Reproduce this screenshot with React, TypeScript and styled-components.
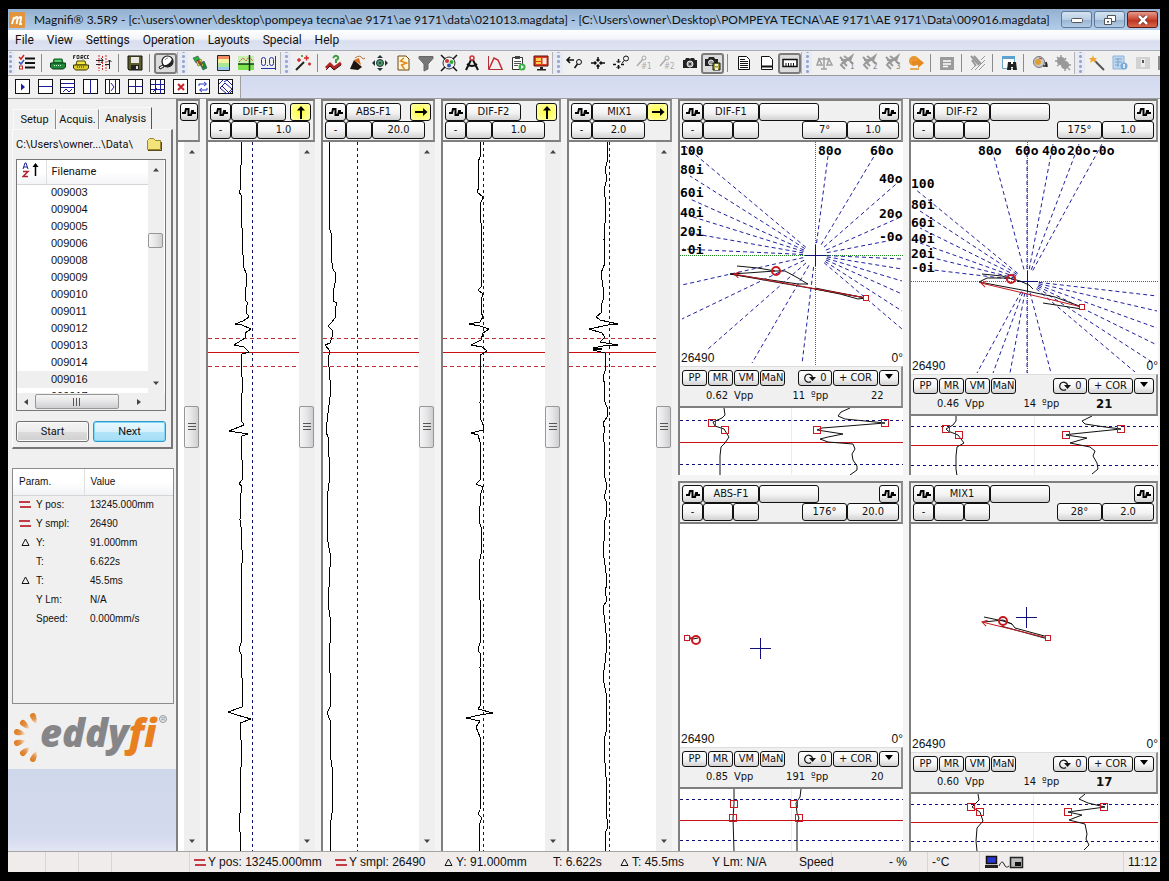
import React from "react";
import styled, { createGlobalStyle, css } from "styled-components";

const UI = `Roboto, "Open Sans", sans-serif`;
const TAHOMA = `"DejaVu Sans Condensed", "DejaVu Sans", sans-serif`;
const ARIAL = `"Liberation Sans", sans-serif`;

const GlobalStyle = createGlobalStyle`
  * { box-sizing: border-box; }
  body { margin: 0; background: #000; font-family: ${UI}; font-size: 12px; color: #111; }
  button { margin: 0; padding: 0; font: inherit; color: inherit; }
`;

/* ---------- window frame ---------- */

const Frame = styled.div`
  min-height: 100vh;
  padding: 9px 9px 9px 8px;
  background: #000;
  display: flex;
  flex-direction: column;
`;

const TitleBar = styled.header`
  height: 21px;
  display: flex;
  align-items: center;
  padding: 0 2px 0 1px;
  background: linear-gradient(#93b0d0, #b3cdea);
`;

const Title = styled.h1`
  margin: 0 0 0 9px;
  flex: 1;
  font-family: Lato, ${UI};
  font-size: 12px;
  font-weight: 400;
  line-height: 18px;
  white-space: nowrap;
  overflow: hidden;
`;

const WindowButtons = styled.div`
  display: flex;
  gap: 2px;
`;

const WindowButton = styled.button<{ $close?: boolean }>`
  width: 31px;
  height: 17px;
  display: grid;
  place-items: center;
  border: 1px solid ${(p) => (p.$close ? "#5c1a16" : "#5f7a99")};
  border-radius: 3px;
  background: ${(p) =>
    p.$close
      ? "linear-gradient(#e59a8c, #c9452f 50%, #b8301c 51%, #d9674a)"
      : "linear-gradient(#d5e3f2, #b9cee4 50%, #98b4d2 51%, #b4cce6)"};
`;

const MenuBar = styled.nav`
  height: 20px;
  display: flex;
  align-items: center;
  gap: 13px;
  padding-left: 7px;
  background: linear-gradient(#ffffff, #f2f4fa 45%, #d9deef 55%, #dfe4f3);
`;

const MenuItem = styled.button`
  border: 0;
  background: none;
  font-size: 12px;
  line-height: 18px;
`;

/* ---------- tool bars ---------- */

const ToolBar = styled.div`
  height: 26px;
  display: flex;
  align-items: center;
  overflow: hidden;
  background: #f0f0f0;
  border-top: 1px solid #a8abb5;
  border-bottom: 1px solid #9a9a9a;
`;

const ToolButton = styled.button<{ $pressed?: boolean }>`
  flex: none;
  width: 23px;
  height: 21px;
  display: grid;
  place-items: center;
  border: 1px solid transparent;
  border-radius: 3px;
  background: none;
  ${(p) =>
    p.$pressed &&
    css`
      border: 2px solid #7c7c7c;
      background: #dcdcdc;
    `}
`;

const Separator = styled.i`
  flex: none;
  width: 1px;
  height: 18px;
  margin: 0 4px 0 3px;
  background: #8c8c8c;
`;

const Grip = styled.i<{ $first?: boolean }>`
  flex: none;
  width: ${(p) => (p.$first ? 7 : 11)}px;
  height: 22px;
  border-left: ${(p) => (p.$first ? "0" : "1px solid #b4b4b4")};
  background: radial-gradient(circle, #97a4cc 1px, transparent 2px) right 2px top 2px / 5px 5px repeat-y, #e9ebf4;
`;

const LayoutBar = styled.div`
  height: 22px;
  display: flex;
  align-items: center;
  background: linear-gradient(#d3daf0, #dbe0f2);
`;

const LayoutButtons = styled.div`
  width: 233px;
  height: 22px;
  padding: 0 6px 0 7px;
  display: flex;
  align-items: center;
  justify-content: space-between;
  background: #f0f0f0;
  border-right: 1px solid #a0a0a0;
`;

const LayoutButton = styled.button`
  width: 16px;
  height: 16px;
  display: grid;
  border: 0;
  background: none;
`;

/* ---------- workspace ---------- */

const Workspace = styled.main`
  flex: 1;
  display: grid;
  grid-template-columns:
    162px 24px minmax(0, 109fr) minmax(0, 114fr) minmax(0, 120fr) minmax(0, 105fr)
    minmax(0, 225fr) minmax(0, 249fr);
  column-gap: 6px;
  padding-right: 2px;
  background: #f4f4f4;
  border-top: 1px solid #9c9c9c;
`;

const Sidebar = styled.aside`
  margin-right: -6px;
  padding: 0 2px 0 4px;
  display: flex;
  flex-direction: column;
  background: #f0f0f0;
`;

const SidebarSlot = styled.div`
  display: flex;
  flex-direction: column;
`;

const Tabs = styled.div`
  display: flex;
  align-items: flex-end;
  height: 30px;
  padding-left: 1px;
`;

const Tab = styled.button<{ $active?: boolean }>`
  height: ${(p) => (p.$active ? 22 : 20)}px;
  width: ${(p) => (p.$active ? 53 : 43)}px;
  border: 1px solid #fafafa;
  border-right: 1px solid ${(p) => (p.$active ? "#555" : "#8a8a8a")};
  border-bottom: 0;
  background: #f0f0f0;
  font-size: 11px;
  line-height: 16px;
`;

const TabPage = styled.section`
  height: 320px;
  margin-right: 1px;
  padding: 2px 5px 5px 3px;
  display: flex;
  flex-direction: column;
  border: 1px solid #fafafa;
  border-right: 2px solid #777;
  border-bottom: 2px solid #777;
`;

const PathRow = styled.div`
  height: 24px;
  margin-bottom: 3px;
  display: flex;
  align-items: center;
  justify-content: space-between;
  padding-right: 3px;
  font-size: 11px;
`;

const ListBox = styled.div`
  height: 252px;
  display: grid;
  grid-template: minmax(0, 1fr) 17px / minmax(0, 1fr) 17px;
  border: 1px solid #777;
  background: #fff;
`;

const ListView = styled.div`
  overflow: hidden;
`;

const FileTable = styled.table`
  width: 100%;
  border-collapse: collapse;
  table-layout: fixed;
  font-family: ${ARIAL};
  font-size: 11px;
  th {
    height: 24px;
    padding: 0 0 0 5px;
    text-align: left;
    font-family: ${UI};
    font-weight: 400;
    background: linear-gradient(#fff 50%, #f3f4f6);
    border-bottom: 1px solid #d5d5d5;
  }
  th:first-child {
    width: 29px;
    border-right: 1px solid #dedfe1;
  }
  td {
    height: 17px;
    padding: 0 0 0 5px;
    line-height: 15px;
  }
`;

const FileRow = styled.tr<{ $selected?: boolean }>`
  background: ${(p) => (p.$selected ? "#efefef" : "transparent")};
`;

const ActionRow = styled.div`
  display: flex;
  gap: 4px;
  margin-top: 10px;
`;

const ActionButton = styled.button<{ $primary?: boolean }>`
  flex: 1;
  height: 21px;
  border: 1px solid ${(p) => (p.$primary ? "#2c9ac9" : "#707070")};
  border-radius: 3px;
  font-size: 11px;
  background: ${(p) =>
    p.$primary
      ? "linear-gradient(#eaf8fe, #d6f0fc 50%, #b4e4f9 51%, #a5def5)"
      : "linear-gradient(#f4f4f4, #ebebeb 50%, #dcdcdc 51%, #d0d0d0)"};
  box-shadow: inset 0 0 0 1px ${(p) => (p.$primary ? "#7fd8f5" : "#fbfbfb")};
`;

const ParamBox = styled.div`
  height: 236px;
  margin-top: 19px;
  border: 1px solid #8c8c8c;
`;

const ParamTable = styled.table`
  width: 100%;
  border-collapse: collapse;
  table-layout: fixed;
  font-family: ${ARIAL};
  font-size: 10px;
  th,
  td {
    padding: 0 0 0 6px;
    height: 19px;
    text-align: left;
    font-weight: 400;
    white-space: nowrap;
  }
  thead th {
    height: 26px;
    background: linear-gradient(#fff 50%, #f1f3f5);
    border-bottom: 1px solid #d5d5d5;
  }
  thead th:first-child {
    width: 71px;
    border-right: 1px solid #e0e0e0;
  }
`;

const ParamName = styled.span`
  display: grid;
  grid-template-columns: 12px auto;
  align-items: center;
  gap: 5px;
`;

const LogoBox = styled.div`
  height: 65px;
  padding: 7px 0 0 1px;
`;

const SidebarFill = styled.div`
  flex: 1;
  margin: 0 -2px 0 -4px;
  background: linear-gradient(#cfd7eb, #d3daee 80%, #e2e6f4);
`;

/* ---------- strip charts ---------- */

const Panel = styled.section`
  min-width: 0;
  display: flex;
  flex-direction: column;
  border-left: 2px solid #7f7f7f;
  background: #fff;
`;

const PanelHeader = styled.div`
  height: 43px;
  flex: none;
  padding: 2px 2px 0;
  display: flex;
  flex-direction: column;
  border-top: 2px solid #7f7f7f;
  border-right: 2px solid #8f8f8f;
  border-bottom: 2px solid #7f7f7f;
  background: #f0f0f0;
  overflow: hidden;
`;

const HeaderRow = styled.div`
  display: flex;
  height: 18px;
`;

const KeyButton = styled.button<{ $w: number; $h?: number; $active?: boolean }>`
  flex: none;
  width: ${(p) => p.$w}px;
  height: ${(p) => p.$h ?? 18}px;
  display: flex;
  align-items: center;
  justify-content: center;
  gap: 4px;
  border: 1px solid #111;
  border-radius: 3px;
  font-family: ${TAHOMA};
  font-size: 11px;
  line-height: 14px;
  white-space: nowrap;
  background: ${(p) =>
    p.$active ? "radial-gradient(#ffff3c, #ffffb4)" : "linear-gradient(#ffffff, #f3f3f3 55%, #d2d2d2)"};
`;

const Spacer = styled.span`
  flex: 1;
`;

const PanelBody = styled.div`
  flex: 1;
  min-height: 0;
  display: flex;
`;

const Chart = styled.svg`
  flex: 1 1 0;
  width: 100%;
  min-width: 0;
  min-height: 0;
  display: block;
  background: #fff;
`;

const ScrollTrack = styled.div<{ $horizontal?: boolean }>`
  flex: none;
  display: flex;
  flex-direction: ${(p) => (p.$horizontal ? "row" : "column")};
  align-items: center;
  width: ${(p) => (p.$horizontal ? "auto" : "16px")};
  padding: ${(p) => (p.$horizontal ? "0 5px" : "6px 1px 6px 0")};
  background: #efefef;
`;

const ScrollRun = styled.i<{ $grow: number }>`
  flex: ${(p) => p.$grow} 1 0;
`;

const Thumb = styled.i<{ $w: number; $h: number }>`
  flex: none;
  width: ${(p) => p.$w}px;
  height: ${(p) => p.$h}px;
  display: grid;
  place-items: center;
  border: 1px solid #979797;
  border-radius: 2px;
  background: ${(p) =>
    p.$w > p.$h
      ? "linear-gradient(#f5f5f5, #e6e6e8 50%, #cfcfd2)"
      : "linear-gradient(90deg, #f5f5f5, #e6e6e8 50%, #cfcfd2)"};
`;

/* ---------- impedance planes ---------- */

const PlaneColumn = styled.div`
  min-width: 0;
  display: grid;
  grid-template-rows: minmax(0, 376fr) minmax(0, 370fr);
  row-gap: 6px;
`;

const PlanePart = styled.div<{ $grow: number }>`
  flex: ${(p) => p.$grow} 1 0;
  min-height: 0;
  display: flex;
`;

const Controls = styled.div`
  flex: none;
  height: 42px;
  padding: 3px 2px 0;
  border-top: 1px solid #ddd;
  border-right: 2px solid #8f8f8f;
  border-bottom: 2px solid #7f7f7f;
  background: #f0f0f0;
`;

const ControlRow = styled.div`
  display: flex;
  gap: 1px;
`;

const Readout = styled.dl`
  margin: 1px 0 0;
  display: grid;
  grid-template-columns: 46px 52px 25px 32px 1fr;
  font-family: ${TAHOMA};
  font-size: 11px;
  line-height: 18px;
`;

const Reading = styled.dd<{ $end?: boolean }>`
  margin: 0;
  padding-left: ${(p) => (p.$end ? 0 : 6)}px;
  text-align: ${(p) => (p.$end ? "right" : "left")};
`;

const Depth = styled.dd<{ $strong?: boolean }>`
  margin: 0;
  padding-left: ${(p) => (p.$strong ? 28 : 34)}px;
  font-size: ${(p) => (p.$strong ? 13 : 11)}px;
  font-weight: ${(p) => (p.$strong ? 700 : 400)};
`;

/* ---------- status bar ---------- */

const StatusBar = styled.footer`
  height: 21px;
  display: grid;
  grid-template-columns: 38fr 33fr 33fr 78fr 141fr 107fr 111fr 65fr 94fr 87fr 37fr 53fr 43fr 52fr 144fr 36fr;
  background: #f0ecec;
  border-top: 1px solid #a5a5a5;
`;

const StatusCell = styled.div<{ $line?: boolean }>`
  min-width: 0;
  padding-left: 4px;
  display: flex;
  align-items: center;
  gap: 2px;
  white-space: nowrap;
  font-family: ${ARIAL};
  font-size: 12px;
  line-height: 18px;
  border-right: ${(p) => (p.$line ? "1px solid #d8d5d5" : "0")};
`;

/* ---------- small glyphs ---------- */

const Wave = () => (
  <svg width="14" height="10" viewBox="0 0 14 10" aria-hidden="true">
    <path d="M0 6h3L4 2h2.500v6H9l1-4h1v2h3" fill="none" stroke="#000" strokeWidth="2" />
  </svg>
);

const Arrow = ({ dir }: { dir: "up" | "right" }) => (
  <svg width="16" height="14" viewBox="0 0 16 14" aria-hidden="true">
    <path
      d={dir === "up" ? "M8 14V3" : "M2 7h10"}
      fill="none"
      stroke="#000"
      strokeWidth="2"
    />
    <path d={dir === "up" ? "M4 5.500l4-4.500 4 4.500z" : "M10 3l4.500 4L10 11z"} />
  </svg>
);

const Tri = ({ dir }: { dir: "up" | "down" | "left" | "right" }) => {
  const d = { up: "M1 5.500L4 2l3 3.500z", down: "M1 2.500h6L4 6z", left: "M6 1v6L2 4z", right: "M2 1v6l4-3z" }[dir];
  return (
    <svg width="8" height="8" viewBox="0 0 8 8" aria-hidden="true">
      <path d={d} fill="#444" />
    </svg>
  );
};

const GripLines = ({ vertical }: { vertical?: boolean }) => (
  <svg width="8" height="8" viewBox="0 0 8 8" aria-hidden="true">
    <path d={vertical ? "M0.500 0v8M3.500 0v8M6.500 0v8" : "M0 0.500h8M0 3.500h8M0 6.500h8"} stroke="#555" strokeWidth="1" />
  </svg>
);

const RedBars = () => (
  <svg width="12" height="9" viewBox="0 0 12 9" aria-hidden="true">
    <path d="M0 2h11M1 7h11" stroke="#c23b45" strokeWidth="2" />
  </svg>
);

const Delta = () => (
  <svg width="12" height="9" viewBox="0 0 12 9" aria-hidden="true">
    <path d="M3 7.500L6.500 1l3.500 6.500z" fill="none" stroke="#111" />
  </svg>
);

const VScroll = ({ before = 252, after = 391, thumb = 42 }) => (
  <ScrollTrack>
    <Tri dir="up" />
    <ScrollRun $grow={before} />
    <Thumb $w={15} $h={thumb}>{thumb > 20 && <GripLines />}</Thumb>
    <ScrollRun $grow={after} />
    <Tri dir="down" />
  </ScrollTrack>
);

/* ---------- tool icons, drawn on a 16 x 16 grid ---------- */

const ICONS: Record<string, React.ReactNode> = {
  checklist: (
    <g fill="none">
      <path d="M6 3.500h10M6 8h10M6 12.500h10" stroke="#111" strokeWidth="2" />
      <path d="M0 2l2 2 3-4" stroke="#c22" strokeWidth="1.500" />
      <path d="M0 7l2 2 3-4" stroke="#35c" strokeWidth="1.500" />
      <rect x="0.500" y="11" width="3" height="3" stroke="#c22" />
    </g>
  ),
  connect: (
    <g>
      <path d="M3 8l1-4h8l1 4z" fill="#2fb04c" stroke="#0b5a20" />
      <path d="M0.500 8h15v4l-2 2h-11l-2-2z" fill="#1f8a3a" stroke="#0b3a15" />
      <path d="M4 10.500h8M5.500 6h5" stroke="#d8f2dc" strokeDasharray="1 1" />
    </g>
  ),
  force: (
    <g>
      <path d="M3 10l1-4h8l1 4z" fill="#f1e640" stroke="#4b4500" />
      <path d="M0.500 10h15v3l-2 2h-11l-2-2z" fill="#d9cb2a" stroke="#3a3500" />
      <path d="M4 12h8" stroke="#222" strokeDasharray="1 1" />
      <path d="M0.500 4V0.500h2M0 2h2M4 0.500h2v3H4zM8 4V0.500h2v2H8l2 2M13.500 0.500h-2v3h2M16 0.500h-1.500v3H16" fill="none" stroke="#111" strokeWidth="0.800" />
    </g>
  ),
  balance: (
    <g fill="none">
      <path d="M3 0v16M6.500 1v14M10 0v16" stroke="#c33" strokeDasharray="2 1" />
      <path d="M0 5.500h7M0 9.500h5M9 9.500h5M13.500 5v9M11.500 7l2-2 2 2M5 3l2 2.500L5 8" stroke="#222" />
    </g>
  ),
  save: (
    <g>
      <path d="M1 1h14v14H2l-1-1z" fill="#5d5d2a" stroke="#111" />
      <path d="M4 2h8v6H4z" fill="#e8e8e4" />
      <path d="M4 10h8v5H4z" fill="#222" />
      <path d="M9 11h2v3H9z" fill="#ddd" />
    </g>
  ),
  probe: (
    <g>
      <circle cx="9.500" cy="6.500" r="5.500" fill="#fff" stroke="#111" strokeWidth="1.200" />
      <path d="M5 10q6 1 9-6 2 4-1 6.500-4 3-8-0.500z" fill="#222" />
      <path d="M1 12l4-2 1 2-4 2z" fill="#fff" stroke="#111" />
      <path d="M7 5q1-2 3-2" stroke="#888" fill="none" />
    </g>
  ),
  cscan: (
    <g stroke="#234" strokeWidth="0.500">
      <path d="M1 3l5-2 2 4-4 3z" fill="#2cae3c" />
      <path d="M4 6l5-2 2 5-5 2z" fill="#e8e337" />
      <path d="M8 9l4-3 3 7-4 2z" fill="#1e8c35" />
      <path d="M5 5l3 1 2 4-3-1z" fill="#d8431e" />
      <path d="M9 8l2 1 1 3-2-1z" fill="#e8e337" />
    </g>
  ),
  palette: (
    <g>
      <path d="M3 1h11v3H3z" fill="#f08a60" />
      <path d="M3 4h11v4H3z" fill="#f5f0a0" />
      <path d="M3 8h11v4H3z" fill="#a8e69a" />
      <path d="M3 12h11v3H3z" fill="#9ac8ec" />
      <path d="M2.500 0.500h12v15h-12z" fill="none" stroke="#222" />
    </g>
  ),
  zones: (
    <g>
      <path d="M0 1h16v7H0z" fill="#c9efb0" />
      <path d="M0 9h16v6H0z" fill="#7fe04f" />
      <path d="M1 7l4-4 3 3 3-4 4 4" stroke="#d43" fill="none" strokeDasharray="2 1" />
      <path d="M0 9h16M11.500 0v16" stroke="#0b3d0b" strokeWidth="1.500" />
    </g>
  ),
  number: (
    <g fill="none" stroke="#2233aa">
      <rect x="0.500" y="2.500" width="4" height="8" rx="2" />
      <rect x="8.500" y="2.500" width="4" height="8" rx="2" />
      <path d="M6 10.500h1M0 13.500h15M14.500 1v14" />
    </g>
  ),
  wand: (
    <g stroke="#222">
      <path d="M1 15L9 7" strokeWidth="2" />
      <path d="M9 3h5M11.500 0.500v5M2 5h4M4 3v4M13 9h3M14.500 7.500v3" stroke="#d12b2b" strokeWidth="1.500" />
      <path d="M6 1h2M7 0v2" stroke="#2a8f2a" />
    </g>
  ),
  helpline: (
    <g fill="none">
      <path d="M0 13l4-4 4 4 7-5" stroke="#b32626" strokeWidth="3" />
      <path d="M7 3q3-4 5-1 1 2-2 3v3" stroke="#3d9b3d" strokeWidth="2" />
      <path d="M0 15l4-4 4 4 7-5" stroke="#3b0d0d" />
    </g>
  ),
  defect: (
    <g>
      <path d="M1 14L5 5l8 7-4 3z" fill="#1b1410" />
      <path d="M5 5l5-2 2 7" fill="#d86a1a" />
      <path d="M6 3q5-4 8 1l2-1" fill="none" stroke="#b5733a" />
    </g>
  ),
  move: (
    <g fill="#24323a">
      <path d="M8 0l3 3H5zM8 16l3-3H5zM0 8l3-3v6zM16 8l-3-3v6z" />
      <circle cx="8" cy="8" r="3.500" fill="#4d9a68" stroke="#24323a" />
      <circle cx="8" cy="8" r="1" />
    </g>
  ),
  sigdoc: (
    <g>
      <path d="M3 1h8l3 3v11H3z" fill="#fff6d8" stroke="#6b4710" />
      <path d="M9 3L5.500 6l6 2-5 2 3 4" fill="none" stroke="#e0871a" strokeWidth="1.500" />
    </g>
  ),
  filter: <path d="M1 1.500h14v2L10 9v5l-4 2V9L1 3.500z" fill="#777" stroke="#666" />,
  target: (
    <g fill="none">
      <circle cx="8" cy="8" r="6" stroke="#333" />
      <circle cx="6" cy="6" r="2" fill="#c33" />
      <circle cx="10.500" cy="7" r="2" fill="#3a3" />
      <circle cx="8" cy="10.500" r="2" fill="#35b" />
      <path d="M0 0l4 4M16 0l-4 4M0 16l4-4M16 16l-4-4" stroke="#111" strokeWidth="1.500" />
    </g>
  ),
  compass: (
    <g fill="none">
      <path d="M7 5L2 15M9 5l5 10M3 9q5 4 10 0" stroke="#111" strokeWidth="2" />
      <circle cx="8" cy="3" r="2" stroke="#c33" strokeWidth="1.500" />
    </g>
  ),
  curve: (
    <g fill="none">
      <path d="M1.500 1v13.500H16" stroke="#b23038" />
      <path d="M2 14L7 3l4 2 4 9" stroke="#c5292f" strokeWidth="1.500" />
    </g>
  ),
  clipboard: (
    <g>
      <path d="M2.500 2.500h10v12h-10z" fill="#fff" stroke="#333" />
      <path d="M5 1h5v3H5z" fill="#444" />
      <path d="M4 6.500h7M4 8.500h7M4 10.500h4" stroke="#555" />
      <circle cx="12" cy="12" r="3.500" fill="#3fae4a" />
      <path d="M11 10l3 2-3 2z" fill="#fff" />
    </g>
  ),
  monitor: (
    <g>
      <path d="M1 1h14v10H1z" fill="#e03a20" stroke="#5e130b" />
      <path d="M3 3h5v3H3zM3 7h5v2H3z" fill="#ffd04a" />
      <path d="M9.500 3h4v6h-4z" fill="#fbe6e0" />
      <path d="M7 12h3v2h3v1.500H4V14h3z" fill="#222" />
    </g>
  ),
  findback: (
    <g fill="none" stroke="#111">
      <path d="M0 5h7M3 2L0 5l3 3" strokeWidth="1.500" />
      <circle cx="12" cy="7" r="2.500" />
      <path d="M10.500 9l-3 4" strokeWidth="1.500" />
    </g>
  ),
  center: (
    <g fill="none" stroke="#111" strokeWidth="1.500">
      <path d="M8 2v4M6.500 4.500L8 6l1.500-1.500M8 14v-4M6.500 11.500L8 10l1.500 1.500M1 8h5M4.500 6.500L6 8 4.500 9.500M15 8h-5M11.500 6.500L10 8l1.500 1.500" />
    </g>
  ),
  zoomsel: (
    <g fill="none" stroke="#111">
      <path d="M5.500 4v3M5.500 10v4M0 9.500h3M8 9.500h3" strokeWidth="1.500" />
      <path d="M3.500 6l2 2 2-2M3.500 13l2-2 2 2" />
      <circle cx="13" cy="3.500" r="2.500" />
      <path d="M11 5.500l-2 3" />
    </g>
  ),
  find1: (
    <g>
      <path d="M7 4l-6 7" stroke="#aaa" strokeWidth="1.500" />
      <circle cx="8" cy="3" r="2" fill="none" stroke="#aaa" />
      <text x="5" y="14" fontSize="8" fill="#aaa" fontFamily={TAHOMA}>#1</text>
    </g>
  ),
  find2: (
    <g>
      <path d="M7 4l-6 7" stroke="#aaa" strokeWidth="1.500" />
      <circle cx="8" cy="3" r="2" fill="none" stroke="#aaa" />
      <text x="5" y="14" fontSize="8" fill="#aaa" fontFamily={TAHOMA}>#2</text>
    </g>
  ),
  camera: (
    <g>
      <path d="M1 5h2l1-2h3l1 1 1-1h3l1 2h2v8H1z" fill="#222" />
      <circle cx="8" cy="9" r="3" fill="#999" stroke="#eee" />
      <circle cx="8" cy="9" r="1" fill="#222" />
    </g>
  ),
  camsave: (
    <g>
      <path d="M0 4h3l1-2h5l1 2h3v7H0z" fill="#222" />
      <circle cx="6" cy="7.500" r="2.500" fill="#999" stroke="#eee" />
      <path d="M8 8h7v7H8z" fill="#a5a13a" stroke="#111" />
      <path d="M10 9h3v2h-3zM10 12.500h3V15h-3z" fill="#eee" />
    </g>
  ),
  page: (
    <g fill="none" stroke="#111">
      <path d="M2.500 1.500h8l3 3v10h-11z" fill="#fff" />
      <path d="M4 4.500h5M4 6.500h8M4 8.500h8M4 10.500h8M4 12.500h8" />
    </g>
  ),
  footer: (
    <g fill="none" stroke="#111">
      <path d="M2.500 1.500h8l3 3v10h-11z" fill="#fff" />
      <path d="M3 11.500h10" strokeWidth="2" />
    </g>
  ),
  ruler: (
    <g fill="none" stroke="#111">
      <path d="M1 4.500h14v7H1z" fill="#fff" strokeWidth="1.500" />
      <path d="M4 11V8M6.500 11V8M9 11V8M11.500 11V8" />
    </g>
  ),
  scale: (
    <g fill="none" stroke="#a0a0a0" strokeWidth="1.500">
      <path d="M8 2v12M2 4h12M5 14h6M3 4L1 10h5zM13 4l-2 6h5z" />
    </g>
  ),
  arrowbox: (
    <g>
      <circle cx="6" cy="6" r="5" fill="#e9962f" />
      <path d="M4 6h6V3l6 5-6 5v-3H4z" fill="#e58a1e" />
      <path d="M2 14h9" stroke="#e7a95a" strokeWidth="2" />
    </g>
  ),
  note: (
    <g>
      <path d="M1 2h14v13H1z" fill="#9b9b9b" />
      <path d="M4 6h8M4 9h8M4 11.500h5" stroke="#fff" strokeWidth="1.500" />
    </g>
  ),
  hatch: (
    <g stroke="#999">
      <path d="M1 1l8 9M4 1l7 8M2 5l4 6" strokeWidth="2" />
      <path d="M1 15l5-5M5 15L15 5M9 15l6-6M11 5l4-4" />
    </g>
  ),
  findpage: (
    <g>
      <path d="M1.500 1.500h12v12h-12z" fill="#fff" stroke="#6da8c9" />
      <path d="M1 1h13v3H1z" fill="#5aa2cf" />
      <path d="M7 7h3v2h2V7h3l1 8h-4v-3h-2v3H6z" fill="#222" />
    </g>
  ),
  plugbug: (
    <g>
      <circle cx="7" cy="7" r="5.500" fill="#c9c9c9" stroke="#777" />
      <circle cx="6" cy="7" r="3" fill="#e0a030" />
      <path d="M11 11h3V7q1 2 1 5" stroke="#222" fill="none" strokeWidth="1.500" />
      <path d="M7 3l3 1" stroke="#c33" />
    </g>
  ),
  bug: (
    <g fill="#999">
      <circle cx="6" cy="6" r="4" />
      <circle cx="10" cy="10" r="4" />
      <path d="M0 6h5M6 0v5M10 16v-5M16 10h-5M13 13l2 2M2 2l3 3M11 3l-2 3M2 11l3-2" stroke="#999" strokeWidth="1.500" />
    </g>
  ),
  magic: (
    <g>
      <path d="M6 6l9 9" stroke="#555" strokeWidth="2" />
      <path d="M4 0l1 3h3L6 5l1 3-3-2-3 2 1-3-2-2h3z" fill="#f0a52a" />
    </g>
  ),
  sheet: (
    <g>
      <path d="M1 1h11v13H1z" fill="#bcd7ef" stroke="#8db4d6" />
      <path d="M3 4h7M3 7h7M3 10h4M6 3v9" stroke="#7ba5cc" />
      <circle cx="12" cy="11" r="3.500" fill="#77a9d8" />
      <path d="M12 9v4" stroke="#fff" strokeWidth="1.500" />
    </g>
  ),
  card: (
    <g>
      <path d="M1 2h14v12H1z" fill="#d2d2d2" />
      <path d="M6 4h4v8H6z" fill="#eee" />
      <path d="M7 5h2v3H7z" fill="#555" />
    </g>
  ),
  cut: <path d="M0 1h16v14H0z" fill="#8d8d8d" />,
};

const worm = (n: number) => (
  <g>
    <path d="M1 2l4 4-3 4 4 4M5 1l4 3 4-3-2 5 3 3M8 5l-3 3 3 3M2 5h9" fill="none" stroke="#9a9a9a" strokeWidth="2" />
    <text x="11" y="14" fontSize="8" fill="#888" fontFamily={TAHOMA}>{n}</text>
  </g>
);
ICONS.worm1 = worm(1);
ICONS.worm2 = worm(2);
ICONS.worm3 = worm(3);

const Icon = ({ name }: { name: string }) => (
  <svg width="16" height="16" viewBox="0 0 16 16" overflow="visible" aria-hidden="true">
    {ICONS[name]}
  </svg>
);

/* "|" is a divider and "::" starts a new group; "!" marks a pressed tool. */
const TOOLS =
  "checklist | connect force balance | save | !probe :: cscan palette zones number :: wand | helpline defect move sigdoc filter target compass curve clipboard monitor :: findback center zoomsel find1 find2 camera !camsave | page footer !ruler :: scale worm1 worm2 worm3 arrowbox | note | hatch | findpage | plugbug bug :: magic sheet card cut".split(
    " "
  );

const LAYOUT_GLYPHS: React.ReactNode[] = [
  <path d="M6 4.500l4 3.500-4 3.500z" fill="#1c1c9c" stroke="none" />,
  <path d="M1 7.500h14" />,
  <path d="M1 4.500h14M1 8.500h14M3 13l3-3 3 3 3-3" />,
  <path d="M7.500 1v14" />,
  <path d="M4.500 1v14M10.500 1v14M6 4l3 4-3 4" />,
  <path d="M7.500 1v14M1 7.500h14" />,
  <path d="M5.500 1v14M10.500 1v14M1 5.500h14M1 10.500h14M3 13L7 9" />,
  <path d="M5 5l6 6M11 5l-6 6" stroke="#c8232b" strokeWidth="2" />,
  <path d="M4 7V5h7M9 3l2.500 2L9 7M12 9v2H5M7 9l-2.500 2L7 13" stroke="#2438c8" />,
  <path d="M2 9l5-5 7 6-5 5zM6 3l3-2 6 6M4 7l6 6M1 5l4-4M11 15l4-4" />,
];

const LAYOUT_NAMES = ["Play", "Rows", "Rows with strip", "Columns", "Columns with strip", "Quad", "Grid", "Close", "Swap", "Layers"];

/* ---------- signals ---------- */

interface StripData {
  name: string;
  gain: string;
  dir: "up" | "right";
  blank: boolean;
  centre: number;
  trace: string;
}

const STRIPS: StripData[] = [
  {
    name: "DIF-F1", gain: "1.0", dir: "up", blank: true, centre: 44,
    trace: "33,0 33,23 32,28 32,48 31,50 34,54 33,61 33,81 34,86 34,95 35,97 34,104 35,113 36,126 38,131 39,136 38,145 37,158 40,161 38,165 38,170 41,175 35,179 27,182 34,183 43,187 37,191 37,196 26,203 36,205 41,210 34,212 33,221 34,235 34,251 33,265 33,278 36,283 21,289 40,292 34,294 33,298 34,318 34,338 31,342 34,344 33,351 32,378 33,385 34,408 34,421 33,441 33,461 33,501 31,508 33,512 33,521 34,536 34,565 20,570 29,573 43,577 32,581 32,588 33,598 33,625 32,632 33,651 32,671 31,683 32,690 32,712",
  },
  {
    name: "ABS-F1", gain: "20.0", dir: "right", blank: true, centre: 34,
    trace: "7,0 6,18 6,61 7,88 8,91 9,121 10,127 13,132 12,141 10,151 10,159 14,161 12,168 12,176 9,180 5,184 9,188 9,195 7,201 2,203 7,209 5,218 6,225 7,238 7,255 5,271 3,290 5,295 6,315 6,341 4,358 4,378 4,395 7,411 7,425 6,445 5,460 7,475 7,501 6,515 7,531 7,565 4,571 7,578 7,585 7,611 9,625 9,671 8,678 7,712",
  },
  {
    name: "DIF-F2", gain: "1.0", dir: "up", blank: true, centre: 40,
    trace: "37,0 37,15 35,20 36,45 34,50 40,55 37,63 38,81 38,145 35,148 40,152 38,158 38,170 40,175 37,180 26,182 37,184 46,187 40,191 38,198 28,203 39,205 44,209 37,213 38,231 37,261 38,278 41,285 40,288 28,291 35,293 37,300 37,338 33,342 40,345 38,351 36,378 38,385 39,408 36,421 36,445 37,458 37,501 35,508 38,513 37,525 38,563 35,567 50,571 37,573 23,576 37,579 33,585 37,595 38,618 37,668 35,672 39,676 36,683 36,712",
  },
  {
    name: "MIX1", gain: "2.0", dir: "right", blank: false, centre: 40,
    trace: "38,0 38,20 36,28 38,36 35,48 37,61 36,81 35,98 36,121 32,131 34,145 34,158 32,165 33,170 27,175 31,178 49,182 39,183 20,187 33,191 36,195 31,200 49,203 34,204 24,206 33,207 24,208 36,211 37,225 34,236 36,243 35,258 38,265 38,275 34,281 36,288 34,295 36,305 35,318 35,331 38,345 35,355 38,361 37,375 35,381 36,391 34,408 37,431 38,441 36,450 38,458 34,465 36,481 38,501 36,521 34,536 37,551 37,575 38,586 35,598 36,621 38,648 37,668 39,685 36,691 37,712",
  },
];

interface PlaneData {
  name: string;
  angle: string;
  gain: string;
  size: number;
  centre: [number, number];
  axes?: boolean;
  rays: [number, number][];
  labels: [number, number, string][];
  traces: string[];
  ring: [number, number];
  from: [number, number];
  to: [number, number];
  volts: string;
  phase: string;
  depth: string;
  strong?: boolean;
  mini: { size: number; top: number; mid: number; low: number; div: number; traces: string[]; marks: [number, number][] };
}

const PLANES: PlaneData[][] = [
  [
    {
      name: "DIF-F1", angle: "7°", gain: "1.0", size: 224, centre: [135, 113], axes: true,
      rays: [[5, 4], [10, 34], [10, 57], [10, 74], [10, 91], [3, 107], [2, 143], [2, 177], [28, 207], [72, 221], [122, 222], [148, 14], [202, 1], [223, 36], [223, 74], [223, 96], [222, 117], [222, 127], [222, 139], [222, 152], [222, 169], [222, 187]],
      labels: [[0, 13, "100"], [0, 32, "80i"], [0, 55, "60i"], [0, 75, "40i"], [0, 94, "20i"], [0, 112, "-0i"], [138, 13, "80o"], [190, 13, "60o"], [199, 41, "40o"], [199, 76, "20o"], [199, 99, "-0o"]],
      traces: ["57,124 78,126 95,129 105,129 118,136 126,141 128,142 118,142 50,132 67,131 95,129", "50,132 186,156 150,149 135,146", "135,147 160,152 178,157 186,156"],
      ring: [96, 129], from: [186, 156], to: [54, 132],
      volts: "0.62", phase: "11", depth: "22",
      mini: {
        size: 67, top: 12, mid: 34, low: 56, div: 111,
        traces: ["44,0 45,7 42,10 33,14 35,18 44,21 49,29 45,35 41,39 40,48 40,68", "170,0 161,4 158,8 165,11 205,15 142,20 137,22 163,26 148,29 140,31 148,34 173,36 175,41 172,46 173,52 177,58 177,62 170,67"],
        marks: [[32, 15], [45, 22], [205, 15], [137, 22]],
      },
    },
    {
      name: "ABS-F1", angle: "176°", gain: "20.0", size: 223, centre: [80, 124], rays: [], labels: [],
      traces: ["7,114 13,115 18,114"], ring: [16, 116], from: [7, 114], to: [12, 114],
      volts: "0.85", phase: "191", depth: "20",
      mini: {
        size: 62, top: 10, mid: 31, low: 51, div: 111,
        traces: ["54,0 54,15 53,29 54,62", "121,0 120,8 116,14 117,24 119,29 117,34 117,62"],
        marks: [[54, 15], [53, 29], [114, 15], [119, 29]],
      },
    },
  ],
  [
    {
      name: "DIF-F2", angle: "175°", gain: "1.0", size: 232, centre: [116, 139], axes: true,
      rays: [[4, 47], [9, 69], [9, 86], [9, 101], [14, 114], [14, 127], [66, 231], [82, 231], [99, 231], [116, 231], [140, 231], [81, 7], [116, 1], [142, 2], [168, 2], [191, 2], [246, 154], [246, 169], [246, 186], [246, 203], [241, 220], [224, 230]],
      labels: [[67, 13, "80o"], [104, 13, "60o"], [131, 13, "40o"], [156, 13, "20o"], [180, 13, "-0o"], [0, 46, "100"], [0, 67, "80i"], [0, 85, "60i"], [0, 101, "40i"], [0, 116, "20i"], [0, 130, "-0i"]],
      traces: ["71,132 91,134 109,139 118,143 122,147", "68,140 76,136 99,136", "68,140 111,148 144,155 171,165", "132,161 171,167"],
      ring: [100, 137], from: [171, 165], to: [70, 141],
      volts: "0.46", phase: "14", depth: "21", strong: true,
      mini: {
        size: 59, top: 10, mid: 29, low: 49, div: 123,
        traces: ["45,0 45,5 42,9 35,13 37,15 47,19 53,27 46,31 45,40 45,53 46,60", "181,0 171,5 174,8 194,11 210,13 161,18 155,19 176,22 159,27 179,31 184,35 182,40 186,47 187,53 181,58"],
        marks: [[35, 13], [48, 19], [210, 13], [155, 19]],
      },
    },
    {
      name: "MIX1", angle: "28°", gain: "2.0", size: 228, centre: [115, 93], rays: [], labels: [],
      traces: ["73,93 92,97 101,100 104,104 137,113", "73,98 92,96 101,100", "90,102 137,115"], ring: [92, 97], from: [137, 114], to: [71, 98],
      volts: "0.60", phase: "14", depth: "17", strong: true,
      mini: {
        size: 57, top: 10, mid: 28, low: 47, div: 122,
        traces: ["67,0 68,6 61,13 69,18 72,27 66,34 65,47 66,57", "174,0 168,5 177,9 194,13 157,18 171,21 158,26 174,30 176,40 175,45 178,51 173,56"],
        marks: [[60, 13], [69, 18], [193, 13], [157, 18]],
      },
    },
  ],
];

const FILES = ["009003", "009004", "009005", "009006", "009008", "009009", "009010", "009011", "009012", "009013", "009014", "009016", "009017"];

const PARAMS: [React.ReactNode, string, string][] = [
  [<RedBars />, "Y pos:", "13245.000mm"],
  [<RedBars />, "Y smpl:", "26490"],
  [<Delta />, "Y:", "91.000mm"],
  [<i />, "T:", "6.622s"],
  [<Delta />, "T:", "45.5ms"],
  [<i />, "Y Lm:", "N/A"],
  [<i />, "Speed:", "0.000mm/s"],
];

/* ---------- pieces ---------- */

const Strip = ({ s }: { s: StripData }) => (
  <Panel>
    <PanelHeader>
      <HeaderRow>
        <KeyButton $w={21} aria-label="Signal"><Wave /></KeyButton>
        <KeyButton $w={55}>{s.name}</KeyButton>
        <Spacer />
        <KeyButton $w={21} $active aria-label="Axis"><Arrow dir={s.dir} /></KeyButton>
      </HeaderRow>
      <HeaderRow>
        <KeyButton $w={21}>-</KeyButton>
        {s.blank && <KeyButton $w={26} aria-label="Offset" />}
        <KeyButton $w={53}>{s.gain}</KeyButton>
      </HeaderRow>
    </PanelHeader>
    <PanelBody>
      <Chart shapeRendering="crispEdges" role="img" aria-label={`${s.name} strip chart`}>
        <line x1={s.centre + 0.5} x2={s.centre + 0.5} y1="0" y2="100%" stroke="#10106a" strokeDasharray="3 3" />
        <line x1="0" x2="100%" y1="196.500" y2="196.500" stroke="#c03038" strokeDasharray="4 3" />
        <line x1="0" x2="100%" y1="210.500" y2="210.500" stroke="#cc1018" />
        <line x1="0" x2="100%" y1="224.500" y2="224.500" stroke="#c03038" strokeDasharray="4 3" />
        <polyline points={s.trace} fill="none" stroke="#000" />
      </Chart>
      <VScroll />
    </PanelBody>
  </Panel>
);

const Ray = ({ c, end }: { c: [number, number]; end: [number, number] }) => {
  const dx = end[0] - c[0];
  const dy = end[1] - c[1];
  const k = 12 / Math.hypot(dx, dy);
  return <line x1={c[0] + dx * k} y1={c[1] + dy * k} x2={end[0]} y2={end[1]} stroke="#2020a0" strokeDasharray="4 3" />;
};

const PlaneChart = ({ p }: { p: PlaneData }) => {
  const [cx, cy] = p.centre;
  const [tx, ty] = p.to;
  const turn = (Math.atan2(ty - p.from[1], tx - p.from[0]) * 180) / Math.PI;
  return (
    <Chart role="img" aria-label={`${p.name} impedance plane`}>
      {p.axes && (
        <g stroke="#1c8a1c" strokeDasharray="1 1" shapeRendering="crispEdges">
          <line x1="0" x2="100%" y1={cy + 0.5} y2={cy + 0.5} />
          <line x1={cx + 0.5} x2={cx + 0.5} y1="0" y2="100%" />
        </g>
      )}
      {p.rays.map((r) => <Ray key={r.join()} c={p.centre} end={r} />)}
      <path d={`M${cx - 10} ${cy + 0.5}h21M${cx + 0.5} ${cy - 10}v21`} stroke="#10107c" shapeRendering="crispEdges" />
      {p.labels.map(([x, y, t]) => (
        <text key={t} x={x} y={y} fontFamily='"DejaVu Sans Mono", monospace' fontWeight="700" fontSize="13" fill="#000">{t}</text>
      ))}
      {p.traces.map((t) => <polyline key={t} points={t} fill="none" stroke="#111" />)}
      <g fill="none" stroke="#c81820">
        <line x1={p.from[0]} y1={p.from[1]} x2={tx} y2={ty} />
        <path d="M-5 -3L0 0l-5 3" transform={`translate(${tx} ${ty}) rotate(${turn})`} />
        <rect x={p.from[0] - 2.5} y={p.from[1] - 2.5} width="5" height="5" fill="#fff" />
        <circle cx={p.ring[0]} cy={p.ring[1]} r="4" strokeWidth="2" />
      </g>
      <text x="1" y={p.size - 4} fontFamily={ARIAL} fontSize="12" fill="#111">26490</text>
      <text x="100%" y={p.size - 4} textAnchor="end" fontFamily={ARIAL} fontSize="12" fill="#111">0°</text>
    </Chart>
  );
};

const Plane = ({ p }: { p: PlaneData }) => (
  <Panel>
    <PanelHeader>
      <HeaderRow>
        <KeyButton $w={21} aria-label="Signal"><Wave /></KeyButton>
        <KeyButton $w={56}>{p.name}</KeyButton>
        <KeyButton $w={60} aria-label="Reference" />
        <Spacer />
        <KeyButton $w={20} aria-label="Signal type"><Wave /></KeyButton>
      </HeaderRow>
      <HeaderRow>
        <KeyButton $w={21}>-</KeyButton>
        <KeyButton $w={30} aria-label="X offset" />
        <KeyButton $w={26} aria-label="Y offset" />
        <Spacer />
        <KeyButton $w={45}>{p.angle}</KeyButton>
        <KeyButton $w={52}>{p.gain}</KeyButton>
      </HeaderRow>
    </PanelHeader>
    <PlanePart $grow={p.size}><PlaneChart p={p} /></PlanePart>
    <Controls>
      <ControlRow>
        {["PP", "MR", "VM", "MaN"].map((t) => <KeyButton key={t} $w={25} $h={16}>{t}</KeyButton>)}
        <Spacer />
        <KeyButton $w={34} $h={16}>
          <svg width="13" height="12" viewBox="0 0 13 12" aria-hidden="true">
            <path d="M8 9.500A4 4 0 1 1 9.500 5" fill="none" stroke="#111" strokeWidth="1.200" />
            <path d="M6 5h7l-3.500 4z" fill="#111" />
          </svg>
          0
        </KeyButton>
        <KeyButton $w={45} $h={16}>+ COR</KeyButton>
        <KeyButton $w={20} $h={16} aria-label="More">
          <svg width="8" height="8" viewBox="0 0 8 8" aria-hidden="true"><path d="M0 0h8L4 5z" /></svg>
        </KeyButton>
      </ControlRow>
      <Readout>
        <Reading $end>{p.volts}</Reading>
        <Reading>Vpp</Reading>
        <Reading $end>{p.phase}</Reading>
        <Reading>ºpp</Reading>
        <Depth $strong={p.strong}>{p.depth}</Depth>
      </Readout>
    </Controls>
    <PlanePart $grow={p.mini.size}>
      <Chart role="img" aria-label={`${p.name} detail`}>
        <g shapeRendering="crispEdges">
          <line x1={p.mini.div} x2={p.mini.div} y1="0" y2="100%" stroke="#ececec" />
          <line x1="0" x2="100%" y1={p.mini.top + 0.5} y2={p.mini.top + 0.5} stroke="#10107c" strokeDasharray="3 3" />
          <line x1="0" x2="100%" y1={p.mini.low + 0.5} y2={p.mini.low + 0.5} stroke="#10107c" strokeDasharray="3 3" />
          <line x1="0" x2="100%" y1={p.mini.mid + 0.5} y2={p.mini.mid + 0.5} stroke="#cc1018" />
        </g>
        {p.mini.traces.map((t) => <polyline key={t} points={t} fill="none" stroke="#111" />)}
        {p.mini.marks.map(([x, y]) => (
          <rect key={`${x},${y}`} x={x - 3.5} y={y - 3.5} width="7" height="7" fill="none" stroke="#c81820" />
        ))}
      </Chart>
    </PlanePart>
  </Panel>
);

/* Petals sit on an arc; each has a round head and a pale tail turned to the centre. */
const PETALS: [number, number, number][] = [[20, 5, 68], [10, 12, 42], [4, 21, 14], [4, 32, -14], [10, 42, -42], [20, 48, -68]];

const Logo = () => (
  <svg width="158" height="56" viewBox="0 0 158 56" role="img" aria-label="eddyfi">
    <defs>
      <linearGradient id="petal">
        <stop offset="0" stopColor="#dd7a1e" />
        <stop offset="0.500" stopColor="#e39248" />
        <stop offset="1" stopColor="#f8ece0" />
      </linearGradient>
    </defs>
    {PETALS.map(([x, y, turn]) => (
      <path key={y} d="M-3 0q0-3 3-3 4 0 9 3-5 3-9 3-3 0-3-3z" fill="url(#petal)" transform={`translate(${x} ${y}) rotate(${turn})`} />
    ))}
    <text x="27" y="36" fontFamily='"Open Sans", sans-serif' fontStyle="italic" fontWeight="800" fontSize="38" fill="#868689">
      eddy<tspan fill="#e8801f">fi</tspan>
    </text>
    <circle cx="150" cy="8" r="3.500" fill="none" stroke="#999" />
    <text x="148" y="10" fontFamily={ARIAL} fontSize="6" fill="#888">R</text>
  </svg>
);

export default function App() {
  return (
    <Frame>
      <GlobalStyle />
      <TitleBar>
        <svg width="16" height="16" viewBox="0 0 16 16" aria-hidden="true">
          <rect width="16" height="16" rx="1" fill="#e2953f" />
          <path d="M3 12l2-7M5 7q4-4 3.500 0L7.500 12M8.500 7q4.500-4 3.500 0l-1 5h2" fill="none" stroke="#fff" strokeWidth="1.800" />
        </svg>
        <Title>
          Magnifi® 3.5R9 - [c:\users\owner\desktop\pompeya tecna\ae 9171\ae 9171\data\021013.magdata] -
          [C:\Users\owner\Desktop\POMPEYA TECNA\AE 9171\AE 9171\Data\009016.magdata]
        </Title>
        <WindowButtons>
          <WindowButton aria-label="Minimize">
            <svg width="12" height="6" viewBox="0 0 12 6"><rect x="0.500" y="1.500" width="11" height="4" rx="1" fill="#fff" stroke="#555" /></svg>
          </WindowButton>
          <WindowButton aria-label="Restore">
            <svg width="13" height="12" viewBox="0 0 13 12">
              <path d="M4.500 1.500h8v6h-8z" fill="#fff" stroke="#555" />
              <path d="M1.500 4.500h7v6h-7z" fill="#fff" stroke="#555" />
              <path d="M4 7h2v1.500H4z" fill="#555" />
            </svg>
          </WindowButton>
          <WindowButton $close aria-label="Close">
            <svg width="12" height="10" viewBox="0 0 12 10">
              <path d="M2 1l8 8M10 1L2 9" stroke="#5a2a26" strokeWidth="4" />
              <path d="M2 1l8 8M10 1L2 9" stroke="#fff" strokeWidth="2.500" />
            </svg>
          </WindowButton>
        </WindowButtons>
      </TitleBar>
      <MenuBar>
        {["File", "View", "Settings", "Operation", "Layouts", "Special", "Help"].map((m) => <MenuItem key={m}>{m}</MenuItem>)}
      </MenuBar>
      <ToolBar>
        <Grip $first />
        {TOOLS.map((t, i) => {
          if (t === "|") return <Separator key={i} />;
          if (t === "::") return <Grip key={i} />;
          const name = t.replace("!", "");
          return <ToolButton key={i} $pressed={t !== name} aria-label={name}><Icon name={name} /></ToolButton>;
        })}
      </ToolBar>
      <LayoutBar>
        <LayoutButtons>
          {LAYOUT_GLYPHS.map((g, i) => (
            <LayoutButton key={i} aria-label={LAYOUT_NAMES[i]}>
              <svg width="16" height="16" viewBox="0 0 16 16" fill="none" stroke="#1c1c9c">
                <rect x="0.500" y="0.500" width="14" height="14" fill="#fff" stroke="#111" />
                {g}
              </svg>
            </LayoutButton>
          ))}
        </LayoutButtons>
      </LayoutBar>

      <Workspace>
        <Sidebar>
          <SidebarSlot>
            <Tabs role="tablist">
              <Tab role="tab">Setup</Tab>
              <Tab role="tab">Acquis.</Tab>
              <Tab role="tab" $active aria-selected="true">Analysis</Tab>
            </Tabs>
            <TabPage>
              <PathRow>
                C:\Users\owner...\Data\
                <svg width="17" height="15" viewBox="0 0 17 15" aria-hidden="true">
                  <path d="M1.500 12.500v-9l2-2h4l2 2h5v9z" fill="#f2e27a" stroke="#9a8430" />
                  <path d="M2 13.500h13M15.500 5v9" stroke="#5a4c14" />
                </svg>
              </PathRow>
              <ListBox>
                <ListView>
                  <FileTable>
                    <thead>
                      <tr>
                        <th aria-label="Sort">
                          <svg width="18" height="16" viewBox="0 0 18 16">
                            <path d="M1 7l2-6h1l2 6M2 5h3" fill="none" stroke="#2020a0" />
                            <path d="M1 9.500h5L1 14.500h5" fill="none" stroke="#b02030" strokeWidth="1.500" />
                            <path d="M13.500 14V2" stroke="#000" strokeWidth="1.500" />
                            <path d="M10.500 5l3-4 3 4z" />
                          </svg>
                        </th>
                        <th>Filename</th>
                      </tr>
                    </thead>
                    <tbody>
                      {FILES.map((f) => (
                        <FileRow key={f} $selected={f === "009016"}>
                          <td />
                          <td>{f}</td>
                        </FileRow>
                      ))}
                    </tbody>
                  </FileTable>
                </ListView>
                <VScroll before={58} after={130} thumb={15} />
                <ScrollTrack $horizontal>
                  <Tri dir="left" />
                  <ScrollRun $grow={5} />
                  <Thumb $w={84} $h={15}><GripLines vertical /></Thumb>
                  <ScrollRun $grow={16} />
                  <Tri dir="right" />
                </ScrollTrack>
                <ScrollTrack $horizontal />
              </ListBox>
              <ActionRow>
                <ActionButton>Start</ActionButton>
                <ActionButton $primary>Next</ActionButton>
              </ActionRow>
            </TabPage>
            <ParamBox>
              <ParamTable>
                <thead>
                  <tr><th>Param.</th><th>Value</th></tr>
                </thead>
                <tbody>
                  {PARAMS.map(([icon, name, value], i) => (
                    <tr key={i}>
                      <th scope="row"><ParamName>{icon}{name}</ParamName></th>
                      <td>{value}</td>
                    </tr>
                  ))}
                </tbody>
              </ParamTable>
            </ParamBox>
            <LogoBox><Logo /></LogoBox>
          </SidebarSlot>
          <SidebarFill />
        </Sidebar>

        <Panel>
          <PanelHeader>
            <HeaderRow><KeyButton $w={18} aria-label="Signal"><Wave /></KeyButton></HeaderRow>
          </PanelHeader>
          <PanelBody><Spacer /><VScroll /></PanelBody>
        </Panel>

        {STRIPS.map((s) => <Strip key={s.name} s={s} />)}
        {PLANES.map((col, i) => (
          <PlaneColumn key={i}>{col.map((p) => <Plane key={p.name} p={p} />)}</PlaneColumn>
        ))}
      </Workspace>

      <StatusBar>
        <StatusCell $line /><StatusCell $line /><StatusCell $line /><StatusCell $line />
        <StatusCell><RedBars />Y pos: 13245.000mm</StatusCell>
        <StatusCell><RedBars />Y smpl: 26490</StatusCell>
        <StatusCell><Delta />Y: 91.000mm</StatusCell>
        <StatusCell>T: 6.622s</StatusCell>
        <StatusCell><Delta />T: 45.5ms</StatusCell>
        <StatusCell>Y Lm: N/A</StatusCell>
        <StatusCell $line>Speed</StatusCell>
        <StatusCell />
        <StatusCell $line>- %</StatusCell>
        <StatusCell $line>-°C</StatusCell>
        <StatusCell $line>
          <svg width="40" height="14" viewBox="0 0 40 14" aria-hidden="true">
            <path d="M2.500 1.500h10v7h-10z" fill="#2a35d0" stroke="#111" strokeWidth="1.500" />
            <path d="M1 11.500h13" stroke="#222" strokeWidth="3" />
            <path d="M15 11q3-7 5-2t5 2" fill="none" stroke="#222" />
            <path d="M26.500 2.500h12v10h-12z" fill="#bbb" stroke="#222" strokeWidth="1.500" />
            <path d="M31 7h6v4h-6z" fill="#111" />
          </svg>
        </StatusCell>
        <StatusCell>11:12</StatusCell>
      </StatusBar>
    </Frame>
  );
}
